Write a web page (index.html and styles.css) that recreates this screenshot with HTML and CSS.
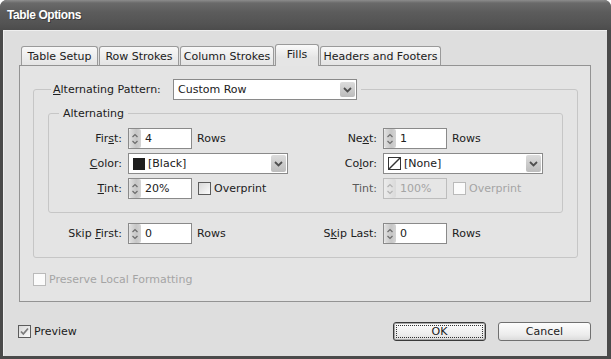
FILE: index.html
```html
<!DOCTYPE html>
<html>

<head>
    <title>Table Options</title>
    <link rel="stylesheet" href="styles.css">
</head>

<body>
    <div class="window">
        <div class="titlebar">Table Options</div>

        <div class="frame">
            <div class="tabs">
                <div class="tab tab-setup">Table Setup</div>
                <div class="tab tab-rows">Row Strokes</div>
                <div class="tab tab-cols">Column Strokes</div>
                <div class="tab tab-fills active">Fills</div>
                <div class="tab tab-headers">Headers and Footers</div>
            </div>

            <div class="panel">
                <fieldset class="group outer">
                    <legend class="pattern">
                        <span class="pattern-label"><u>A</u>lternating Pattern:</span>
                        <div class="dropdown wide">
                            <span class="value">Custom Row</span>
                            <span class="drop-btn small">
                                <svg width="9" height="6" viewBox="0 0 9 6"><polyline points="1,1 4.5,4.5 8,1" /></svg>
                            </span>
                        </div>
                    </legend>

                    <fieldset class="group inner">
                        <legend>Alternating</legend>
                        <div class="fields">
                            <!-- row 1 -->
                            <span class="lbl">Fir<u>s</u>t:</span>
                            <div class="ctrl">
                                <div class="spin">
                                    <span class="arrows"><svg width="12" height="19" viewBox="0 0 12 19"><polyline points="3.5,8 6,5.5 8.5,8" /><polyline points="3.5,12 6,14.5 8.5,12" /></svg></span>
                                    <span class="num">4</span>
                                </div>
                                <span>Rows</span>
                            </div>
                            <span class="lbl">Ne<u>x</u>t:</span>
                            <div class="ctrl">
                                <div class="spin">
                                    <span class="arrows"><svg width="12" height="19" viewBox="0 0 12 19"><polyline points="3.5,8 6,5.5 8.5,8" /><polyline points="3.5,12 6,14.5 8.5,12" /></svg></span>
                                    <span class="num">1</span>
                                </div>
                                <span>Rows</span>
                            </div>

                            <!-- row 2 -->
                            <span class="lbl"><u>C</u>olor:</span>
                            <div class="ctrl">
                                <div class="dropdown color">
                                    <span class="swatch black"></span>
                                    <span class="value">[Black]</span>
                                    <span class="drop-btn">
                                        <svg width="9" height="6" viewBox="0 0 9 6"><polyline points="1,1 4.5,4.5 8,1" /></svg>
                                    </span>
                                </div>
                            </div>
                            <span class="lbl">Co<u>l</u>or:</span>
                            <div class="ctrl">
                                <div class="dropdown color">
                                    <svg class="swatch-none" width="13" height="13" viewBox="0 0 13 13"><rect x="0.5" y="0.5" width="12" height="12" /><line x1="1" y1="12" x2="12" y2="1" /></svg>
                                    <span class="value">[None]</span>
                                    <span class="drop-btn">
                                        <svg width="9" height="6" viewBox="0 0 9 6"><polyline points="1,1 4.5,4.5 8,1" /></svg>
                                    </span>
                                </div>
                            </div>

                            <!-- row 3 -->
                            <span class="lbl"><u>T</u>int:</span>
                            <div class="ctrl">
                                <div class="spin">
                                    <span class="arrows"><svg width="12" height="19" viewBox="0 0 12 19"><polyline points="3.5,8 6,5.5 8.5,8" /><polyline points="3.5,12 6,14.5 8.5,12" /></svg></span>
                                    <span class="num">20%</span>
                                </div>
                                <span class="check-row">
                                    <span class="checkbox"></span>
                                    <span>Overprint</span>
                                </span>
                            </div>
                            <span class="lbl dim">Tint:</span>
                            <div class="ctrl disabled">
                                <div class="spin">
                                    <span class="arrows"><svg width="12" height="19" viewBox="0 0 12 19"><polyline points="3.5,8 6,5.5 8.5,8" /><polyline points="3.5,12 6,14.5 8.5,12" /></svg></span>
                                    <span class="num">100%</span>
                                </div>
                                <span class="check-row">
                                    <span class="checkbox"></span>
                                    <span>Overprint</span>
                                </span>
                            </div>
                        </div>
                    </fieldset>

                    <div class="fields skip">
                        <span class="lbl">Skip <u>F</u>irst:</span>
                        <div class="ctrl">
                            <div class="spin">
                                <span class="arrows"><svg width="12" height="19" viewBox="0 0 12 19"><polyline points="3.5,8 6,5.5 8.5,8" /><polyline points="3.5,12 6,14.5 8.5,12" /></svg></span>
                                <span class="num">0</span>
                            </div>
                            <span>Rows</span>
                        </div>
                        <span class="lbl">S<u>k</u>ip Last:</span>
                        <div class="ctrl">
                            <div class="spin">
                                <span class="arrows"><svg width="12" height="19" viewBox="0 0 12 19"><polyline points="3.5,8 6,5.5 8.5,8" /><polyline points="3.5,12 6,14.5 8.5,12" /></svg></span>
                                <span class="num">0</span>
                            </div>
                            <span>Rows</span>
                        </div>
                    </div>
                </fieldset>

                <div class="check-row preserve disabled">
                    <span class="checkbox"></span>
                    <span>Preserve Local Formatting</span>
                </div>
            </div>

            <div class="footer">
                <div class="check-row preview">
                    <span class="checkbox checked">
                        <svg width="11" height="11" viewBox="0 0 11 11"><polyline points="2,5.5 4.3,8 9,2.5" /></svg>
                    </span>
                    <span>Preview</span>
                </div>
                <div class="buttons">
                    <button class="btn default">OK</button>
                    <button class="btn">Cancel</button>
                </div>
            </div>
        </div>
    </div>
</body>

</html>
```

FILE: styles.css
```css
body {
    margin: 0;
    background: #fff;
    font-family: "DejaVu Sans", sans-serif;
    font-size: 11px;
    line-height: 13px;
    color: #202020;
}

.window {
    width: 611px;
    height: 359px;
    display: flex;
    flex-direction: column;
    border-radius: 7px 7px 0 0;
    overflow: hidden;
    background: #4a4a4a;
}

.titlebar {
    flex: none;
    height: 30px;
    display: flex;
    align-items: center;
    padding-left: 7px;
    background: linear-gradient(#8c8c8c, #6a6a6a 3px, #5c5c5c 12px, #535353 24px, #4c4c4c);
    color: #fff;
    font-family: "Liberation Sans", sans-serif;
    font-weight: bold;
    font-size: 12px;
    letter-spacing: -0.4px;
    text-shadow: 1px 1px 0 #3a3a3a;
}

.frame {
    flex: 1;
    margin: 0 4px 3px 3px;
    padding: 14px 16px 0;
    background: #dedede;
    box-shadow: inset 1px 1px 0 #efefef;
}

/* tabs */
.tabs {
    display: flex;
    align-items: flex-end;
    gap: 1px;
    height: 21px;
    padding-left: 2px;
}

.tab {
    height: 19px;
    box-sizing: border-box;
    padding-top: 3px;
    text-align: center;
    border: 1px solid #9a9a9a;
    border-bottom: none;
    border-radius: 3px 3px 0 0;
    background: linear-gradient(#f8f8f8, #e4e4e4);
}

.tab-setup {
    width: 77px;
}

.tab-rows {
    width: 80px;
}

.tab-cols {
    width: 94px;
}

.tab-fills {
    width: 44px;
}

.tab-headers {
    width: 121px;
}

.tab.active {
    height: 22px;
    margin-bottom: -1px;
    z-index: 1;
    background: linear-gradient(#fafafa, #e5e5e5 60%);
}

.panel {
    border: 1px solid #939393;
    background: #e4e4e4;
    padding: 13px 12px 15px 13px;
}

/* group boxes */
.group {
    margin: 0;
    min-width: 0;
    border: 1px solid #c6c6c6;
    border-radius: 3px;
}

.outer {
    padding: 7px 0 13px;
}

.inner {
    margin: 0 14px;
    padding: 8px 0 13px;
}

.pattern {
    display: flex;
    align-items: center;
    margin-left: 17px;
    padding: 0 4px 0 2px;
}

.pattern-label {
    width: 120px;
}

.inner legend {
    margin-left: 10px;
    padding: 0 4px;
}

.fields {
    display: grid;
    grid-template-columns: 73px 170px 73px auto;
    column-gap: 6px;
    row-gap: 4px;
    align-items: center;
}

.skip {
    margin-top: 10px;
    padding-left: 15px;
}

.lbl {
    text-align: right;
}

.dim {
    color: #5a5a5a;
}

.ctrl {
    display: flex;
    align-items: center;
    gap: 5px;
}

/* spin field */
.spin {
    width: 64px;
    height: 21px;
    box-sizing: border-box;
    display: flex;
    align-items: center;
    border: 1px solid #8a8a8a;
    background: #fff;
}

.arrows {
    width: 12px;
    height: 19px;
    display: flex;
    background: linear-gradient(90deg, #e2e2e2, #c6c6c6 60%, #d4d4d4);
    border-radius: 2px;
}

.arrows polyline {
    fill: none;
    stroke: #6c6c6c;
    stroke-width: 1.2;
}

.num {
    padding-left: 4px;
}

.disabled {
    color: #a4a4a4;
}

.disabled .spin {
    border-color: #bdbdbd;
    background: #e6e6e6;
}

.disabled .arrows {
    background: linear-gradient(90deg, #ececec, #dadada);
}

.disabled .arrows polyline {
    stroke: #b2b2b2;
}

/* dropdowns */
.dropdown {
    height: 21px;
    box-sizing: border-box;
    display: flex;
    align-items: center;
    padding: 0 1px 0 4px;
    border: 1px solid #8a8a8a;
    background: #fff;
}

.wide {
    width: 184px;
}

.color {
    width: 160px;
}

.dropdown .value {
    flex: 1;
}

.drop-btn {
    width: 15px;
    height: 17px;
    display: flex;
    align-items: center;
    justify-content: center;
    border-radius: 2px;
    background: linear-gradient(#dcdcdc, #bcbcbc);
}

.drop-btn.small {
    height: 15px;
}

.drop-btn polyline {
    fill: none;
    stroke: #4f4f4f;
    stroke-width: 1.8;
}

.swatch {
    width: 12px;
    height: 12px;
    margin-right: 3px;
}

.black {
    background: #1e1e1e;
}

.swatch-none {
    margin-right: 3px;
}

.swatch-none rect {
    fill: #fff;
    stroke: #333;
}

.swatch-none line {
    stroke: #333;
    stroke-width: 1.4;
}

/* checkboxes */
.check-row {
    display: flex;
    align-items: center;
    gap: 3px;
}

.ctrl .check-row {
    margin-left: 1px;
}

.checkbox {
    width: 13px;
    height: 13px;
    box-sizing: border-box;
    display: flex;
    align-items: center;
    justify-content: center;
    border: 1px solid #5c5c5c;
    background: linear-gradient(135deg, #d8d8d8, #fbfbfb);
}

.disabled .checkbox {
    border-color: #bababa;
    background: #fbfbfb;
}

.checked polyline {
    fill: none;
    stroke: #7c7c7c;
    stroke-width: 1.8;
}

.preserve {
    margin-top: 15px;
}

/* footer */
.footer {
    display: flex;
    justify-content: space-between;
    align-items: center;
    margin-top: 20px;
}

.preview {
    margin-left: -1px;
}

.buttons {
    display: flex;
    gap: 12px;
}

.btn {
    width: 93px;
    height: 19px;
    padding: 0;
    font: inherit;
    color: #202020;
    border: 1px solid #707070;
    border-radius: 3px;
    background: linear-gradient(#fdfdfd, #ececec 70%, #dcdcdc);
}

.btn.default {
    border-color: #3a3a3a;
    box-shadow: inset 0 0 0 1px #a8a8a8;
    outline: 1px dotted #333;
    outline-offset: -4px;
}
```
